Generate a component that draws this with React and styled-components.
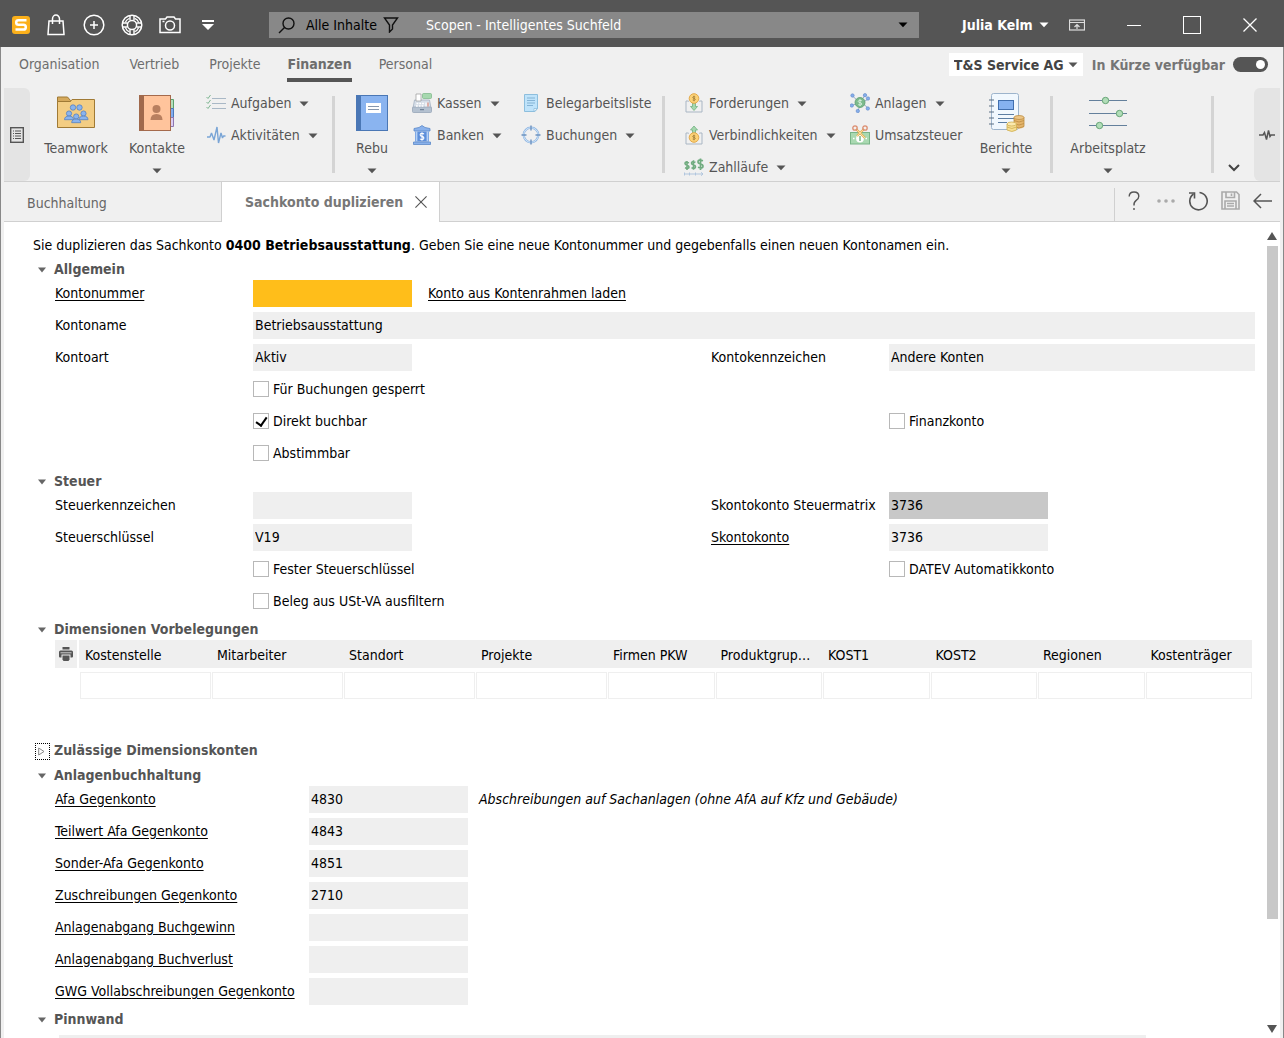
import React, { useState } from 'react';
import styled, { createGlobalStyle, css } from 'styled-components';

const GlobalStyle = createGlobalStyle`
  * {
    box-sizing: border-box;
  }
  body {
    margin: 0;
    background-color: #f0f0f0;
  }
  body, button, input, select, textarea {
    font-family: "DejaVu Sans Condensed", "Noto Sans", sans-serif;
    font-size: 14px;
    line-height: 20px;
  }
  button {
    border: none;
    background: none;
    padding: 0;
    color: inherit;
    cursor: pointer;
  }
  svg {
    display: block;
    flex: none;
  }
`;

/* ---------- Icons ---------- */

const Caret = ({ color = "#555" }) => (
    <svg width="10" height="6" viewBox="0 0 10 6"><path d="M0.500 0.500h9L5 5.300z" fill={color} /></svg>
);

const LogoIcon = () => (
    <svg width="18" height="18" viewBox="0 0 18 18">
        <rect width="18" height="18" rx="3" fill="#fbb01b" />
        <path d="M14.500 4.300H6.500Q4.200 4.300 4.200 6.500Q4.200 8.800 6.500 8.800H11.500Q13.800 8.800 13.800 11.200Q13.800 13.600 11.500 13.600H3.500" fill="none" stroke="#fff" strokeWidth="2.500" />
    </svg>
);

const BagIcon = () => (
    <svg width="18" height="22" viewBox="0 0 18 22" fill="none" stroke="#fff" strokeWidth="1.500">
        <path d="M2 7h14l1 13.500H1z" />
        <path d="M5.500 10V5a3.500 4 0 0 1 7 0v5" />
    </svg>
);

const PlusIcon = () => (
    <svg width="22" height="22" viewBox="0 0 22 22" fill="none" stroke="#fff" strokeWidth="1.500">
        <circle cx="11" cy="11" r="9.800" />
        <path d="M11 7v8M7 11h8" />
    </svg>
);

const HelpRingIcon = () => (
    <svg width="22" height="22" viewBox="0 0 22 22" fill="none" stroke="#fff">
        <circle cx="11" cy="11" r="9.800" strokeWidth="1.500" />
        <circle cx="11" cy="11" r="4.600" strokeWidth="1.500" />
        <circle cx="11" cy="11" r="7.200" strokeWidth="1.200" strokeDasharray="6 5.310" strokeDashoffset="-2.600" />
        <path d="M9 1.500v5M13 1.500v5M9 15.500v5M13 15.500v5M1.500 9h5M1.500 13h5M15.500 9h5M15.500 13h5" strokeWidth="1.400" />
    </svg>
);

const CameraIcon = () => (
    <svg width="22" height="18" viewBox="0 0 22 18" fill="none" stroke="#fff" strokeWidth="1.500">
        <path d="M1 3h5.500L8 1h7l1.500 2H21v13.500H1z" />
        <circle cx="11" cy="9.500" r="4.500" />
        <path d="M3.500 5.500h2" />
    </svg>
);

const QuickMenuIcon = () => (
    <svg width="12" height="11" viewBox="0 0 12 11" fill="#fff"><path d="M0 0h12v2H0zM0 4h12L6 10z" /></svg>
);

const SearchIcon = () => (
    <svg width="17" height="17" viewBox="0 0 17 17" fill="none" stroke="#111" strokeWidth="1.400">
        <circle cx="10.500" cy="6.500" r="5.500" />
        <path d="M6.500 10.500L1 16" />
    </svg>
);

const FunnelIcon = () => (
    <svg width="16" height="16" viewBox="0 0 16 16" fill="none" stroke="#111" strokeWidth="1.400">
        <path d="M1.500 1h13L9.500 8v4L6.500 15V8z" />
    </svg>
);

const RibbonToggleIcon = () => (
    <svg width="16" height="12" viewBox="0 0 16 12" fill="none" stroke="#ddd">
        <rect x="0.500" y="1" width="15" height="10" strokeWidth="1.200" />
        <path d="M1 3.500h14M8 10V6M5.500 8L8 5.500l2.500 2.500" strokeWidth="1.200" />
    </svg>
);

const MinimizeIcon = () => (
    <svg width="14" height="18" viewBox="0 0 14 18"><path d="M0 9.500h14" stroke="#fff" /></svg>
);

const MaximizeIcon = () => (
    <svg width="18" height="18" viewBox="0 0 18 18"><rect x="0.500" y="0.500" width="17" height="17" fill="none" stroke="#fff" /></svg>
);

const CloseIcon = ({ size = 14, color = "#fff" }) => (
    <svg width={size} height={size} viewBox="0 0 14 14"><path d="M0.500 0.500l13 13M13.500 0.500l-13 13" stroke={color} strokeWidth="1.300" /></svg>
);

const ListPanelIcon = () => (
    <svg width="14" height="16" viewBox="0 0 14 16" fill="none" stroke="#555">
        <rect x="0.700" y="0.700" width="12.600" height="14.600" strokeWidth="1.400" />
        <path d="M3 4h1M5 4h6M3 6.500h1M5 6.500h6M3 9h1M5 9h6M3 11.500h1M5 11.500h6" strokeWidth="1.200" />
    </svg>
);

const PulseIcon = () => (
    <svg width="16" height="12" viewBox="0 0 16 12" fill="none" stroke="#555" strokeWidth="1.500">
        <path d="M0 6h4l1.500-2.500 2 7 2-9 1.500 6 1-1.500h4" />
    </svg>
);

const Person = ({ x, y }) => (
    <g transform={`translate(${x} ${y})`}>
        <circle cx="0" cy="0" r="2.600" />
        <path d="M-4.500 6.200a4.500 3.600 0 0 1 9 0z" />
    </g>
);

const TeamworkIcon = () => (
    <svg width="40" height="38" viewBox="0 0 40 38">
        <path d="M1.500 8V3h10l3 3.500V8z" fill="#d5a95c" stroke="#a07a35" />
        <path d="M1.500 7.500h13l1.500-2h22.500v28h-37z" fill="#f3cd83" stroke="#a07a35" />
        <g fill="#8ab4ee" stroke="#5580c0" strokeWidth="0.800">
            <circle cx="17" cy="13.500" r="2.700" />
            <circle cx="23.500" cy="13.500" r="2.700" />
            <Person x={13} y={19.500} />
            <Person x={27.500} y={19.500} />
            <Person x={20.200} y={22.500} />
        </g>
    </svg>
);

const ContactsIcon = () => (
    <svg width="36" height="38" viewBox="0 0 36 38">
        <path d="M31 5.500h3.500v9H31z" fill="#b3dfbb" stroke="#5a9e6a" />
        <path d="M31 14.500h3.500v9H31z" fill="#82adf0" stroke="#4b78b8" />
        <path d="M31 23.500h3.500v9H31z" fill="#dccdf2" stroke="#8d76b0" />
        <rect x="0.500" y="1.500" width="31" height="35" fill="#ffc49c" stroke="#a56a4c" />
        <path d="M0 1h5v36H0z" fill="#a0694c" />
        <circle cx="17.500" cy="15" r="4" fill="#b87f5f" />
        <path d="M11.500 26q0-6 6-6t6 6z" fill="#b87f5f" />
    </svg>
);

const TasksIcon = () => (
    <svg width="20" height="18" viewBox="0 0 20 18" fill="none">
        <path d="M6 4.500h14M6 9.500h14M6 14.500h14" stroke="#a9b8c6" />
        <path d="M0.500 3l1.500 1.500L4.500 1M0.500 8l1.500 1.500L4.500 6M0.500 13l1.500 1.500L4.500 11" stroke="#7fb692" />
    </svg>
);

const ActivityIcon = () => (
    <svg width="20" height="20" viewBox="0 0 20 20" fill="none" stroke="#7aa5d6" strokeWidth="1.400">
        <path d="M1 12h3l1.500-4 2.500 7 3-13 1.500 16 2.500-10 1.500 5 1-2h2" strokeLinejoin="bevel" />
    </svg>
);

const LedgerIcon = () => (
    <svg width="32" height="38" viewBox="0 0 32 38">
        <rect x="0.500" y="1.500" width="31" height="35" fill="#8ab4f0" stroke="#4a77b5" />
        <path d="M0 1h5v36H0z" fill="#4a77b5" />
        <path d="M10 9h15v10H10z" fill="#fff" />
        <path d="M12 12.500h11M12 15.500h11" stroke="#8797ad" />
    </svg>
);

const RegisterIcon = () => (
    <svg width="20" height="20" viewBox="0 0 20 20">
        <path d="M1 15L2.500 7h15L19 15z" fill="#d5dde7" stroke="#a5b2c3" strokeWidth="0.800" />
        <rect x="0.500" y="14" width="19" height="5.500" rx="1" fill="#b4c1d0" stroke="#97a6b8" strokeWidth="0.800" />
        <path d="M4 1h5v7H4z" fill="#fff" stroke="#999" strokeWidth="0.700" />
        <rect x="10.500" y="0.500" width="9" height="5" rx="1" fill="#a6d8ae" stroke="#78b585" strokeWidth="0.700" />
        <path d="M4.500 10.500h8M4 13h8.500" stroke="#fff" strokeWidth="1.600" strokeDasharray="1.800 1" />
        <path d="M14 9.500v4" stroke="#fff" strokeWidth="1.200" />
        <path d="M16 9.500v4" stroke="#e48f7d" strokeWidth="1.200" />
        <path d="M8 16.700h4" stroke="#61748b" />
    </svg>
);

const BankIcon = () => (
    <svg width="20" height="20" viewBox="0 0 20 20">
        <path d="M2 6V3.500L7 2.500 10 0.500l3 2 5 1V6z" fill="#8ab2ec" stroke="#5b88c8" strokeWidth="0.800" />
        <path d="M3 6.500h14v10H3z" fill="#5d8fdb" />
        <path d="M4.500 6.500v10M15.500 6.500v10" stroke="#b5d0f5" strokeWidth="1.800" />
        <path d="M1.500 17h17v2.500h-17z" fill="#8ab2ec" stroke="#5b88c8" strokeWidth="0.800" />
        <path d="M12 9.200q-.600-.900-2-.900-1.900 0-1.900 1.500 0 1.300 1.900 1.600t1.900 1.700q0 1.500-1.900 1.500-1.500 0-2.100-.900M10 7.300v8.400" fill="none" stroke="#fff" strokeWidth="1.100" />
    </svg>
);

const WorklistIcon = () => (
    <svg width="20" height="20" viewBox="0 0 20 20">
        <path d="M3.500 1.500h13v14L14 18.500H3.500z" fill="#bfe3fa" stroke="#8dbedd" />
        <path d="M13 18.500v-3h3.500z" fill="#fff" stroke="#8dbedd" strokeWidth="0.800" />
        <path d="M6 5h8M6 7.500h8M6 10h8M6 12.500h6" stroke="#7eaed0" strokeWidth="0.900" />
    </svg>
);

const TargetIcon = () => (
    <svg width="20" height="20" viewBox="0 0 20 20" fill="none">
        <circle cx="10" cy="10" r="7.300" stroke="#8fb5e2" strokeWidth="2.200" />
        <circle cx="10" cy="10" r="7.300" stroke="#d1e6f8" strokeWidth="1" />
        <path d="M10 0.500v5M10 14.500v5M0.500 10h5M14.500 10h5" stroke="#6d92bf" strokeWidth="1.400" />
    </svg>
);

const ReceivableIcon = ({ up }) => (
    <svg width="20" height="20" viewBox="0 0 20 20">
        <path d="M4.500 8.500V8H2v11h16V8h-2.500v.500" fill="none" stroke="#a9b6c4" />
        <path
            d={up ? "M8.500 9V5H6.500L10 1l3.500 4h-2v4z" : "M8.500 10v3.500h-2L10 17.500l3.500-4h-2V10z"}
            fill="#a5d8ae"
            stroke="#72b080"
            strokeWidth="0.800"
        />
        <circle cx="10" cy={up ? 12.500 : 5.500} r="4.800" fill="#fcd277" stroke="#e2a94b" />
        <path transform={up ? "translate(0 7)" : undefined} d="M11.300 4q-2.600-1-2.600.400 0 .800 1.300 1t1.300 1.200q0 1.200-2.600.400M10 2.700v5.600" fill="none" stroke="#9c7a36" strokeWidth="0.800" />
    </svg>
);

const PaymentRunIcon = () => (
    <svg width="20" height="20" viewBox="0 0 20 20" fill="none" stroke="#71ac80">
        <path d="M5 5.700q-4-1.500-4 .800 0 1.300 2 1.700t2 1.800q0 2.200-4 .800M3 4v9" strokeWidth="1.600" />
        <path d="M11.500 5.200q-4-1.500-4 .900 0 1.400 2 1.800t2 1.900q0 2.300-4 .900M9.500 3.200v9.600" strokeWidth="1.600" />
        <path d="M19 3.700q-5-1.700-5 1.100 0 1.700 2.500 2.200t2.500 2.200q0 2.800-5 1.100M16.500 1.500v11.500" strokeWidth="1.700" />
        <path d="M0 17h19M0.500 15.500v3M5.500 15.500v3M11.500 15.500v3M17 15.300l2 1.700-2 1.700" stroke="#b1c6de" />
    </svg>
);

const AssetsIcon = () => (
    <svg width="20" height="20" viewBox="0 0 20 20">
        <path d="M2.500 3l5 4.500M15 2.500L12 6.500M1.500 12.500l4.500-1.500M8 18l1.500-4.500M18.500 6L14 8.500M18 15l-4-3.500" stroke="#8fa6bf" strokeWidth="0.900" />
        <circle cx="10" cy="9.500" r="5" fill="#7cba8c" stroke="#5d9d6e" strokeWidth="0.800" />
        <path d="M11.800 7.700q-3.600-1.200-3.600.600 0 1 1.800 1.300t1.800 1.500q0 1.700-3.600.600M10 6v7" fill="none" stroke="#d9f1de" strokeWidth="0.900" />
        <g fill="#86aeea" stroke="#5f88c9" strokeWidth="0.600">
            <circle cx="2.500" cy="2.500" r="1.700" />
            <circle cx="15" cy="2.200" r="1.700" />
            <circle cx="1.800" cy="12.500" r="1.700" />
            <circle cx="7.800" cy="18" r="1.700" />
            <circle cx="18" cy="5.500" r="1.700" />
            <circle cx="17.800" cy="15.500" r="1.700" />
        </g>
    </svg>
);

const VatIcon = () => (
    <svg width="20" height="20" viewBox="0 0 20 20">
        <rect x="0.500" y="7.500" width="19" height="11.500" fill="#a9d9b1" stroke="#78b487" />
        <circle cx="10" cy="13.500" r="3.900" fill="#fff" />
        <path d="M10 11v5" stroke="#78b487" strokeWidth="1.500" />
        <path d="M3 13.500h1.500M15.500 13.500H17" stroke="#fff" strokeWidth="1.500" />
        <path d="M6 4l9 9M14 4l-7 7" stroke="#e0b25b" strokeWidth="2.200" />
        <path d="M6 4l9 9M14 4l-7 7" stroke="#f8dc9b" />
        <circle cx="5" cy="3" r="2.200" fill="none" stroke="#dc8d70" strokeWidth="1.300" />
        <circle cx="15" cy="3" r="2.200" fill="none" stroke="#dc8d70" strokeWidth="1.300" />
    </svg>
);

const ReportsIcon = () => (
    <svg width="38" height="40" viewBox="0 0 38 40">
        <rect x="4.500" y="0.500" width="27" height="36" rx="2" fill="#f1f8fe" stroke="#9db4cc" />
        <path d="M2 7h5M2 13h5M2 19h5M2 25h5M2 31h5" stroke="#5c7085" />
        <rect x="11.500" y="7.500" width="15" height="9" fill="#86b2f0" stroke="#416fae" />
        <path d="M11 21.500h16M11 25.500h16M11 29.500h9" stroke="#5c7ea3" />
        <path d="M27 24v10q5 3 10 0V24z" fill="#e5b56b" />
        <ellipse cx="32" cy="24.500" rx="5" ry="2" fill="#edc687" stroke="#bc8d42" strokeWidth="0.800" />
        <path d="M27 27.500q5 3 10 0M27 30.500q5 3 10 0M27 33.500q5 3 10 0M27 24.500v9M37 24.500v9" fill="none" stroke="#bc8d42" strokeWidth="0.800" />
        <path d="M20 31v6q5 3 9.500 0v-6z" fill="#f7df94" />
        <ellipse cx="24.700" cy="31" rx="4.700" ry="2" fill="#fbe9ae" stroke="#cfae50" strokeWidth="0.800" />
        <path d="M20 34q5 3 9.500 0M20 37q5 3 9.500 0M20 31v6M29.500 31v6" fill="none" stroke="#cfae50" strokeWidth="0.800" />
    </svg>
);

const WorkplaceIcon = () => (
    <svg width="38" height="38" viewBox="0 0 38 38">
        <path d="M0 6.500h38M0 19.500h38M0 31.500h38" stroke="#64809c" />
        <g fill="#b1ddb8" stroke="#66a476">
            <circle cx="16.500" cy="6.500" r="3.200" />
            <circle cx="30.500" cy="19.500" r="3.200" />
            <circle cx="10.500" cy="31.500" r="3.200" />
        </g>
    </svg>
);

const ChevronIcon = () => (
    <svg width="12" height="8" viewBox="0 0 12 8"><path d="M1 1l5 5 5-5" fill="none" stroke="#444" strokeWidth="2" /></svg>
);

const QuestionIcon = () => (
    <svg width="12" height="20" viewBox="0 0 12 20" fill="none" stroke="#555" strokeWidth="1.400">
        <path d="M1.200 5.500q0-4.500 4.800-4.500t4.800 4.200q0 2.300-2.600 4.200T6 14.500M6 17v2" />
    </svg>
);

const DotsIcon = () => (
    <svg width="18" height="4" viewBox="0 0 18 4" fill="#aaa">
        <circle cx="2" cy="2" r="1.800" /><circle cx="9" cy="2" r="1.800" /><circle cx="16" cy="2" r="1.800" />
    </svg>
);

const ReloadIcon = () => (
    <svg width="20" height="20" viewBox="0 0 20 20" fill="none" stroke="#555" strokeWidth="1.600">
        <path d="M11.500 1.500A8.700 8.700 0 1 1 5.500 3" />
        <path d="M1 2h5.500v5.500" />
    </svg>
);

const SaveIcon = () => (
    <svg width="19" height="19" viewBox="0 0 19 19" fill="none" stroke="#aaa" strokeWidth="1.600">
        <path d="M1 1h14.500L18 3.500V18H1z" />
        <path d="M5 1v5.500h8.500V1M10.500 2.500v2.500M4 18v-8h11v8M6 12.500h7M6 15h7" />
    </svg>
);

const BackIcon = () => (
    <svg width="19" height="16" viewBox="0 0 19 16" fill="none" stroke="#555" strokeWidth="1.500">
        <path d="M19 8H1.500M8 1L1 8l7 7" />
    </svg>
);

const PrinterIcon = () => (
    <svg width="14" height="14" viewBox="0 0 14 14" fill="#555">
        <path d="M3.500 0h7v2.500h-7zM1.500 3.500h11Q14 3.500 14 5v4.500q0 1-1 1h-1.500v-3h-9v3H1q-1 0-1-1V5q0-1.500 1.500-1.500z" />
        <path d="M1.500 5.800h11" stroke="#eee" strokeWidth="0.800" />
        <path d="M3.500 8.500h7v4l-1 1.500h-5l-1-1.500z" />
    </svg>
);

const SectionOpenIcon = () => (
    <svg width="8" height="6" viewBox="0 0 8 6"><path d="M0 0.500h8L4 5.500z" fill="#666" /></svg>
);

const SectionClosedIcon = () => (
    <svg width="7" height="9" viewBox="0 0 7 9"><path d="M0.700 1v7L6 4.500z" fill="none" stroke="#888" /></svg>
);

const ScrollArrow = ({ up }) => (
    <svg width="10" height="8" viewBox="0 0 10 8"><path d={up ? "M0 8h10L5 0z" : "M0 0h10L5 8z"} fill="#555" /></svg>
);

/* ---------- Data ---------- */

const menuItems = ["Organisation", "Vertrieb", "Projekte", "Finanzen", "Personal"];

const dimensionen = [
    "Kostenstelle", "Mitarbeiter", "Standort", "Projekte", "Firmen PKW",
    "Produktgruppen", "KOST1", "KOST2", "Regionen", "Kostenträger"
];

const anlagenKonten = [
    { label: "Afa Gegenkonto", value: "4830", hint: "Abschreibungen auf Sachanlagen (ohne AfA auf Kfz und Gebäude)" },
    { label: "Teilwert Afa Gegenkonto", value: "4843" },
    { label: "Sonder-Afa Gegenkonto", value: "4851" },
    { label: "Zuschreibungen Gegenkonto", value: "2710" },
    { label: "Anlagenabgang Buchgewinn", value: "" },
    { label: "Anlagenabgang Buchverlust", value: "" },
    { label: "GWG Vollabschreibungen Gegenkonto", value: "" }
];

/* ---------- Parts ---------- */

const SmallEntry = ({ icon, label, menu }) => (
    <SmallButton type="button">
        <SmallIcon>{icon}</SmallIcon>
        {label}
        {menu && <CaretSlot><Caret /></CaretSlot>}
    </SmallButton>
);

const BigEntry = ({ icon, label, menu, width }) => (
    <BigButton type="button" $width={width}>
        <BigIcon>{icon}</BigIcon>
        <span>{label}</span>
        {menu && <BigCaret><Caret /></BigCaret>}
    </BigButton>
);

const Section = ({ title, collapsed, children }) => {
    const [open, setOpen] = useState(!collapsed);

    return (
        <section>
            <SectionHeader $collapsed={collapsed}>
                <SectionToggle type="button" aria-label={title} $dotted={collapsed} onClick={() => setOpen(!open)}>
                    {open ? <SectionOpenIcon /> : <SectionClosedIcon />}
                </SectionToggle>
                <SectionTitle>{title}</SectionTitle>
            </SectionHeader>
            {open && children}
        </section>
    );
};

const Check = ({ label, checked, column }) => (
    <CheckLabel $column={column}>
        <Checkbox type="checkbox" defaultChecked={checked} />
        {label}
    </CheckLabel>
);

const App = () => {
    const [activeMenu, setActiveMenu] = useState("Finanzen");

    return (
        <>
            <GlobalStyle />
            <Window>
                <TitleBar>
                    <QuickAccess>
                        <QuickButton type="button" aria-label="Start" $width={33}><LogoIcon /></QuickButton>
                        <QuickButton type="button" aria-label="Shop"><BagIcon /></QuickButton>
                        <QuickButton type="button" aria-label="Neu"><PlusIcon /></QuickButton>
                        <QuickButton type="button" aria-label="Hilfe"><HelpRingIcon /></QuickButton>
                        <QuickButton type="button" aria-label="Screenshot"><CameraIcon /></QuickButton>
                        <QuickButton type="button" aria-label="Anpassen"><QuickMenuIcon /></QuickButton>
                    </QuickAccess>
                    <SearchBar>
                        <SearchIcon />
                        <ScopeButton type="button">Alle Inhalte<FunnelIcon /></ScopeButton>
                        <SearchInput type="text" aria-label="Suche" placeholder="Scopen - Intelligentes Suchfeld" />
                        <Caret color="#000" />
                    </SearchBar>
                    <WindowControls>
                        <UserButton type="button">Julia Kelm<Caret color="#fff" /></UserButton>
                        <ControlButton type="button" aria-label="Menüband" $width={56}><RibbonToggleIcon /></ControlButton>
                        <ControlButton type="button" aria-label="Minimieren"><MinimizeIcon /></ControlButton>
                        <ControlButton type="button" aria-label="Maximieren"><MaximizeIcon /></ControlButton>
                        <ControlButton type="button" aria-label="Schließen"><CloseIcon /></ControlButton>
                    </WindowControls>
                </TitleBar>
                <Frame>
                    <MenuBar>
                        <Menu>
                            {menuItems.map((item) => (
                                <MenuLink key={item} href="#" $active={item === activeMenu} onClick={() => setActiveMenu(item)}>
                                    {item}
                                </MenuLink>
                            ))}
                        </Menu>
                        <CompanyPicker>
                            <CompanySelect aria-label="Mandant">
                                <option>T&amp;S Service AG</option>
                            </CompanySelect>
                            <Caret />
                        </CompanyPicker>
                        <SwitchLabel>
                            In Kürze verfügbar
                            <Switch type="checkbox" defaultChecked />
                        </SwitchLabel>
                    </MenuBar>
                    <Ribbon>
                        <SideStrip type="button" aria-label="Navigation" $side="left"><ListPanelIcon /></SideStrip>
                        <BigEntry icon={<TeamworkIcon />} label="Teamwork" width={92} />
                        <BigEntry icon={<ContactsIcon />} label="Kontakte" width={70} menu />
                        <SmallColumn $width={140} $indent={14}>
                            <SmallEntry icon={<TasksIcon />} label="Aufgaben" menu />
                            <SmallEntry icon={<ActivityIcon />} label="Aktivitäten" menu />
                        </SmallColumn>
                        <Divider />
                        <BigEntry icon={<LedgerIcon />} label="Rebu" width={74} menu />
                        <SmallColumn $width={112} $indent={3}>
                            <SmallEntry icon={<RegisterIcon />} label="Kassen" menu />
                            <SmallEntry icon={<BankIcon />} label="Banken" menu />
                        </SmallColumn>
                        <SmallColumn $width={141}>
                            <SmallEntry icon={<WorklistIcon />} label="Belegarbeitsliste" />
                            <SmallEntry icon={<TargetIcon />} label="Buchungen" menu />
                        </SmallColumn>
                        <Divider />
                        <SmallColumn $width={185} $indent={19}>
                            <SmallEntry icon={<ReceivableIcon />} label="Forderungen" menu />
                            <SmallEntry icon={<ReceivableIcon up />} label="Verbindlichkeiten" menu />
                            <SmallEntry icon={<PaymentRunIcon />} label="Zahlläufe" menu />
                        </SmallColumn>
                        <SmallColumn $width={120}>
                            <SmallEntry icon={<AssetsIcon />} label="Anlagen" menu />
                            <SmallEntry icon={<VatIcon />} label="Umsatzsteuer" />
                        </SmallColumn>
                        <BigEntry icon={<ReportsIcon />} label="Berichte" width={72} menu />
                        <Divider $indent={8} />
                        <BigEntry icon={<WorkplaceIcon />} label="Arbeitsplatz" width={110} menu />
                        <Spacer />
                        <Divider />
                        <MoreButton type="button" aria-label="Mehr"><ChevronIcon /></MoreButton>
                        <SideStrip type="button" aria-label="Aktivität" $side="right"><PulseIcon /></SideStrip>
                    </Ribbon>
                    <TabBar>
                        <Tab>Buchhaltung</Tab>
                        <Tab $active>
                            Sachkonto duplizieren
                            <TabClose type="button" aria-label="Tab schließen"><CloseIcon size={12} color="#555" /></TabClose>
                        </Tab>
                        <TabTools>
                            <ToolButton type="button" aria-label="Hilfe"><QuestionIcon /></ToolButton>
                            <ToolButton type="button" aria-label="Weitere"><DotsIcon /></ToolButton>
                            <ToolButton type="button" aria-label="Aktualisieren"><ReloadIcon /></ToolButton>
                            <ToolButton type="button" aria-label="Speichern"><SaveIcon /></ToolButton>
                            <ToolButton type="button" aria-label="Zurück"><BackIcon /></ToolButton>
                        </TabTools>
                    </TabBar>
                    <Body>
                        <Form>
                            <Intro>
                                Sie duplizieren das Sachkonto <b>0400 Betriebsausstattung</b>. Geben Sie eine neue Kontonummer und gegebenfalls einen neuen Kontonamen ein.
                            </Intro>

                            <Section title="Allgemein">
                                <Row>
                                    <label htmlFor="kontonummer"><LabelLink href="#">Kontonummer</LabelLink></label>
                                    <Inline>
                                        <Field id="kontonummer" $required />
                                        <LabelLink href="#">Konto aus Kontenrahmen laden</LabelLink>
                                    </Inline>
                                </Row>
                                <Row>
                                    <label htmlFor="kontoname">Kontoname</label>
                                    <Field id="kontoname" defaultValue="Betriebsausstattung" $full />
                                </Row>
                                <Row>
                                    <label htmlFor="kontoart">Kontoart</label>
                                    <Field id="kontoart" defaultValue="Aktiv" />
                                    <label htmlFor="kennzeichen">Kontokennzeichen</label>
                                    <Field id="kennzeichen" defaultValue="Andere Konten" $stretch />
                                </Row>
                                <Row><Check column={2} label="Für Buchungen gesperrt" /></Row>
                                <Row>
                                    <Check column={2} label="Direkt buchbar" checked />
                                    <Check column={4} label="Finanzkonto" />
                                </Row>
                                <Row><Check column={2} label="Abstimmbar" /></Row>
                            </Section>

                            <Section title="Steuer">
                                <Row>
                                    <label htmlFor="steuerkennzeichen">Steuerkennzeichen</label>
                                    <Field id="steuerkennzeichen" />
                                    <label htmlFor="steuermatrix">Skontokonto Steuermatrix</label>
                                    <Field id="steuermatrix" defaultValue="3736" readOnly />
                                </Row>
                                <Row>
                                    <label htmlFor="steuerschluessel">Steuerschlüssel</label>
                                    <Field id="steuerschluessel" defaultValue="V19" />
                                    <label htmlFor="skontokonto"><LabelLink href="#">Skontokonto</LabelLink></label>
                                    <Field id="skontokonto" defaultValue="3736" />
                                </Row>
                                <Row>
                                    <Check column={2} label="Fester Steuerschlüssel" />
                                    <Check column={4} label="DATEV Automatikkonto" />
                                </Row>
                                <Row><Check column={2} label="Beleg aus USt-VA ausfiltern" /></Row>
                            </Section>

                            <Section title="Dimensionen Vorbelegungen">
                                <DimensionTable>
                                    <colgroup>
                                        <Col $width={24} />
                                        {dimensionen.map((name, index) => (
                                            <Col key={name} $width={index < 4 ? 132 : undefined} />
                                        ))}
                                    </colgroup>
                                    <thead>
                                        <tr>
                                            <PrintHead><PrintButton type="button" aria-label="Drucken"><PrinterIcon /></PrintButton></PrintHead>
                                            {dimensionen.map((name) => <Head key={name}>{name}</Head>)}
                                        </tr>
                                    </thead>
                                    <tbody>
                                        <tr>
                                            <td />
                                            {dimensionen.map((name) => (
                                                <Cell key={name}><CellInput aria-label={name} /></Cell>
                                            ))}
                                        </tr>
                                    </tbody>
                                </DimensionTable>
                            </Section>

                            <Section title="Zulässige Dimensionskonten" collapsed />

                            <Section title="Anlagenbuchhaltung">
                                {anlagenKonten.map((konto, index) => (
                                    <AccountRow key={konto.label}>
                                        <label htmlFor={`anlage${index}`}><LabelLink href="#">{konto.label}</LabelLink></label>
                                        <Field id={`anlage${index}`} defaultValue={konto.value} />
                                        {konto.hint && <Hint>{konto.hint}</Hint>}
                                    </AccountRow>
                                ))}
                            </Section>

                            <Section title="Pinnwand">
                                <NoteArea aria-label="Pinnwand" />
                            </Section>
                        </Form>
                        <ScrollTrack>
                            <ScrollArrow up />
                            <ScrollThumb />
                            <ScrollArrow />
                        </ScrollTrack>
                    </Body>
                </Frame>
            </Window>
        </>
    );
};

/* ---------- Window and title bar ---------- */

const Window = styled.div`
  display: flex;
  flex-direction: column;
  height: 100vh;
  color: #000;
`;

const TitleBar = styled.header`
  display: flex;
  align-items: center;
  flex: none;
  height: 47px;
  padding: 3px 0 0 4px;
  background-color: #555;
  color: #fff;
`;

const QuickAccess = styled.div`
  display: flex;
  width: 265px;
`;

const QuickButton = styled.button`
  display: flex;
  align-items: center;
  justify-content: center;
  width: ${({ $width }) => $width || 38}px;
  height: 32px;
`;

const SearchBar = styled.div`
  display: flex;
  align-items: center;
  flex: 1;
  height: 26px;
  padding: 0 11px 0 9px;
  background-color: #888;
`;

const ScopeButton = styled.button`
  display: flex;
  align-items: center;
  gap: 6px;
  flex: none;
  width: 120px;
  padding-left: 11px;
  color: #000;
`;

const SearchInput = styled.input`
  flex: 1;
  min-width: 0;
  padding: 0 11px;
  border: none;
  outline: none;
  background: transparent;
  color: #fff;
  &::placeholder {
    color: #fff;
    opacity: 1;
  }
`;

const WindowControls = styled.div`
  display: flex;
  align-items: center;
  width: 365px;
  padding-left: 43px;
`;

const UserButton = styled.button`
  display: flex;
  align-items: center;
  gap: 6px;
  width: 87px;
  font-weight: bold;
  white-space: nowrap;
`;

const ControlButton = styled.button`
  display: flex;
  align-items: center;
  justify-content: center;
  width: ${({ $width }) => $width || 58}px;
  height: 32px;
`;

const Frame = styled.div`
  display: flex;
  flex-direction: column;
  flex: 1;
  min-height: 0;
  padding: 0 3px;
  border: 1px solid #888;
  border-width: 0 1px;
  background-color: #f0f0f0;
`;

/* ---------- Menu ---------- */

const MenuBar = styled.div`
  display: flex;
  align-items: center;
  flex: none;
  height: 40px;
  padding: 0 12px 5px 0;
`;

const Menu = styled.nav`
  display: flex;
  flex: 1;
`;

const MenuLink = styled.a`
  margin: 7px 15px 0;
  padding-bottom: 4px;
  border-bottom: 4px solid transparent;
  color: #6d6d6d;
  text-decoration: none;
  ${({ $active }) => $active && css`
    margin: 7px 12px 0;
    border-color: #555;
    font-weight: bold;
  `}
`;

const CompanyPicker = styled.div`
  display: flex;
  align-items: center;
  height: 23px;
  padding-right: 5px;
  margin-right: 9px;
  background-color: #fff;
`;

const CompanySelect = styled.select`
  appearance: none;
  width: 119px;
  padding: 0 0 0 5px;
  border: none;
  background: transparent;
  color: #444;
  font-weight: bold;
`;

const SwitchLabel = styled.label`
  display: flex;
  align-items: center;
  gap: 8px;
  color: #757575;
  font-weight: bold;
`;

const Switch = styled.input`
  appearance: none;
  display: flex;
  align-items: center;
  width: 35px;
  height: 15px;
  margin: 0;
  padding: 0 3px;
  border-radius: 8px;
  background-color: #555;
  &::before {
    content: "";
    width: 9px;
    height: 9px;
    border-radius: 50%;
    background-color: #fff;
  }
  &:checked {
    justify-content: flex-end;
  }
`;

/* ---------- Ribbon ---------- */

const Ribbon = styled.div`
  display: flex;
  flex: none;
  height: 95px;
  border-bottom: 1px solid #d0d0d0;
  color: #555;
`;

const SideStrip = styled.button`
  display: flex;
  align-items: center;
  justify-content: center;
  flex: none;
  width: 26px;
  margin-top: 1px;
  background-color: #e4e4e4;
  border-radius: ${({ $side }) => ($side === "left" ? "0 6px 6px 0" : "6px 0 0 6px")};
`;

const BigButton = styled.button`
  display: flex;
  flex-direction: column;
  align-items: center;
  flex: none;
  width: ${({ $width }) => $width}px;
  padding-top: 6px;
`;

const BigIcon = styled.span`
  display: flex;
  align-items: center;
  height: 40px;
  margin-bottom: 5px;
`;

const BigCaret = styled.span`
  margin-top: 10px;
`;

const SmallColumn = styled.div`
  display: flex;
  flex-direction: column;
  flex: none;
  width: ${({ $width }) => $width}px;
  padding-left: ${({ $indent }) => $indent || 0}px;
`;

const SmallButton = styled.button`
  display: flex;
  align-items: center;
  flex: none;
  height: 32px;
  white-space: nowrap;
`;

const SmallIcon = styled.span`
  width: 20px;
  margin-right: 5px;
`;

const CaretSlot = styled.span`
  margin: 2px 0 0 8px;
`;

const Divider = styled.div`
  flex: none;
  width: 3px;
  margin: 9px 0 8px ${({ $indent }) => $indent || 0}px;
  background-color: #d4d4d4;
`;

const Spacer = styled.div`
  flex: 1;
`;

const MoreButton = styled.button`
  display: flex;
  align-items: flex-end;
  justify-content: center;
  flex: none;
  width: 40px;
  padding-bottom: 9px;
`;

/* ---------- Tabs ---------- */

const TabBar = styled.div`
  display: flex;
  flex: none;
  height: 40px;
`;

const Tab = styled.div`
  display: flex;
  align-items: center;
  justify-content: space-between;
  flex: none;
  width: 217px;
  padding: 2px 0 0 23px;
  border-bottom: 1px solid #d0d0d0;
  color: #666;
  ${({ $active }) => $active && css`
    width: 219px;
    padding: 0 12px 0 23px;
    border: 1px solid #d0d0d0;
    border-width: 0 1px;
    background-color: #fff;
    color: #777;
    font-weight: bold;
  `}
`;

const TabClose = styled.button`
  display: flex;
`;

const TabTools = styled.div`
  display: flex;
  align-items: center;
  justify-content: flex-end;
  flex: 1;
  padding-right: 2px;
  border-bottom: 1px solid #d0d0d0;
  &::before {
    content: "";
    align-self: flex-end;
    width: 1px;
    height: 33px;
    margin-right: 3px;
    background-color: #d0d0d0;
  }
`;

const ToolButton = styled.button`
  display: flex;
  align-items: center;
  justify-content: center;
  width: 32px;
  height: 34px;
  margin-bottom: 2px;
`;

/* ---------- Form ---------- */

const Body = styled.main`
  display: flex;
  flex: 1;
  min-height: 0;
  background-color: #fff;
`;

const Form = styled.form`
  flex: 1;
  min-width: 0;
  padding-top: 8px;
  overflow-y: auto;
  scrollbar-width: none;
`;

const Intro = styled.p`
  margin: 0;
  padding-left: 29px;
  line-height: 30px;
`;

const SectionHeader = styled.div`
  display: flex;
  align-items: center;
  gap: 4px;
  height: 20px;
  padding-left: 31px;
  margin-bottom: ${({ $collapsed }) => ($collapsed ? 5 : 0)}px;
`;

const SectionToggle = styled.button`
  display: flex;
  align-items: center;
  justify-content: center;
  width: 15px;
  height: 17px;
  padding-right: 2px;
  ${({ $dotted }) => $dotted && css`
    border: 1px dotted #000;
  `}
`;

const SectionTitle = styled.h2`
  margin: 0 0 2px;
  color: #555;
  font-size: 14px;
  line-height: 20px;
`;

const Row = styled.div`
  display: grid;
  grid-template-columns: 198px 458fr 178px 366fr;
  height: 27px;
  margin: 0 9px 5px 51px;
  line-height: 26px;
`;

const AccountRow = styled(Row)`
  grid-template-columns: 254px 170px 1fr;
`;

const Inline = styled.div`
  display: flex;
  gap: 16px;
`;

const LabelLink = styled.a`
  color: #000;
  text-decoration: underline;
  text-underline-offset: 2px;
`;

const Field = styled.input`
  width: 159px;
  height: 27px;
  padding: 0 2px 1px;
  border: none;
  border-radius: 0;
  outline: none;
  background-color: #efefef;
  color: #000;
  &:read-only {
    background-color: #c8c8c8;
  }
  ${({ $required }) => $required && css`
    background-color: #ffbe1a;
  `}
  ${({ $stretch }) => $stretch && css`
    width: 100%;
  `}
  ${({ $full }) => $full && css`
    grid-column: 2 / -1;
    width: 100%;
  `}
`;

const CheckLabel = styled.label`
  display: flex;
  align-items: center;
  gap: 4px;
  height: 26px;
  grid-column: ${({ $column }) => $column};
`;

const Checkbox = styled.input`
  appearance: none;
  display: flex;
  align-items: center;
  justify-content: center;
  width: 16px;
  height: 16px;
  margin: 0;
  border: 1px solid #b8b8b8;
  background-color: #fff;
  &:checked::before {
    content: "";
    width: 5px;
    height: 9px;
    margin-bottom: 2px;
    border: solid #000;
    border-width: 0 2px 2px 0;
    transform: rotate(35deg);
  }
`;

const Hint = styled.span`
  font-style: italic;
`;

const DimensionTable = styled.table`
  width: calc(100% - 63px);
  margin: 0 12px 42px 51px;
  border-spacing: 0;
  table-layout: fixed;
`;

const Col = styled.col`
  width: ${({ $width }) => ($width ? `${$width}px` : "auto")};
`;

const Head = styled.th`
  height: 28px;
  padding: 1px 6px 0;
  background-color: #efefef;
  font-weight: normal;
  text-align: left;
  overflow: hidden;
  text-overflow: ellipsis;
  white-space: nowrap;
`;

const PrintHead = styled.th`
  height: 28px;
  padding: 0 4px;
  border-right: 2px solid #fff;
  background-color: #efefef;
`;

const PrintButton = styled.button`
  display: block;
`;

const Cell = styled.td`
  padding: 4px 0 0 1px;
`;

const CellInput = styled.input`
  display: block;
  width: 100%;
  height: 27px;
  border: 1px solid #efefef;
  outline: none;
  background-color: #fff;
`;

const NoteArea = styled.textarea`
  display: block;
  width: calc(100% - 173px);
  height: 120px;
  margin: 5px 0 10px 55px;
  border: none;
  outline: none;
  resize: none;
  background-color: #efefef;
`;

const ScrollTrack = styled.div`
  display: flex;
  flex-direction: column;
  align-items: center;
  justify-content: space-between;
  flex: none;
  width: 16px;
  padding: 10px 0 5px;
`;

const ScrollThumb = styled.div`
  width: 11px;
  height: 84%;
  margin: 6px 0 auto;
  background-color: #c8c8c8;
`;

export default App;
